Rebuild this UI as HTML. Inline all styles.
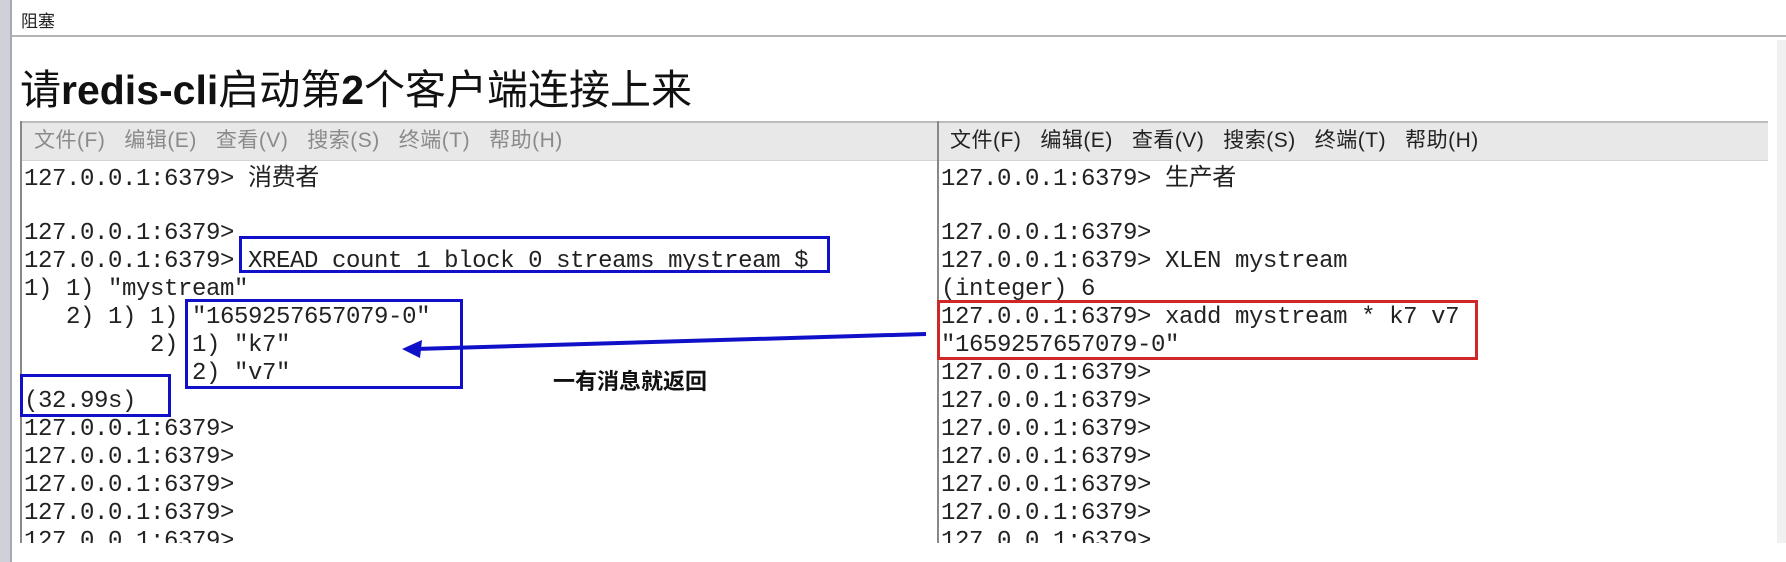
<!DOCTYPE html>
<html><head><meta charset="utf-8">
<style>
body{margin:0;width:1786px;height:562px;background:#fff;position:relative;overflow:hidden;font-family:"Liberation Sans","Noto Sans CJK SC",sans-serif;}
.a{position:absolute;white-space:pre;}
.t{position:absolute;white-space:pre;font-family:"Liberation Mono","Noto Sans CJK SC",monospace;font-size:24px;letter-spacing:-0.4px;color:#222;line-height:28px;}
.m{position:absolute;font-size:21px;white-space:pre;line-height:40px;letter-spacing:0.5px;}
.box{position:absolute;box-sizing:border-box;border:3px solid #1010c8;}
</style></head><body>
<div class="a" style="left:0;top:0;width:10px;height:562px;background:#d0d0d8"></div>
<div class="a" style="left:10px;top:0;width:2px;height:562px;background:#a8a8b0"></div>
<div class="a" style="left:21px;top:7px;font-size:17px;color:#222">阻塞</div>
<div class="a" style="left:12px;top:35px;width:1774px;height:2px;background:#b4b4b4"></div>
<div class="a" style="left:1777px;top:40px;width:9px;height:522px;background:#f0f0f0"></div>
<div class="a" style="left:20px;top:56px;font-size:41px;color:#111;letter-spacing:0px">请<b>redis-cli</b>启动第<b>2</b>个客户端连接上来</div>

<!-- left terminal -->
<div class="a" style="left:20px;top:121px;width:917px;height:40px;background:#e8e8e8;border-top:2px solid #bcbcbc;border-bottom:1px solid #d4d4d4;box-sizing:border-box"></div>
<div class="a" style="left:20px;top:121px;width:2px;height:422px;background:#888"></div>
<div class="m" style="left:34px;top:121px;color:#8a8a8a">文件(F)   编辑(E)   查看(V)   搜索(S)   终端(T)   帮助(H)</div>

<!-- right terminal -->
<div class="a" style="left:937px;top:121px;width:831px;height:40px;background:#e8e8e8;border-top:2px solid #bcbcbc;border-bottom:1px solid #d4d4d4;box-sizing:border-box"></div>
<div class="a" style="left:937px;top:121px;width:2px;height:422px;background:#888"></div>
<div class="m" style="left:950px;top:121px;color:#222">文件(F)   编辑(E)   查看(V)   搜索(S)   终端(T)   帮助(H)</div>

<div class="t" style="left:24px;top:166px">127.0.0.1:6379> 消费者</div>
<div class="t" style="left:24px;top:220px">127.0.0.1:6379>
127.0.0.1:6379> XREAD count 1 block 0 streams mystream $
1) 1) "mystream"
   2) 1) 1) "1659257657079-0"
         2) 1) "k7"
            2) "v7"
(32.99s)
127.0.0.1:6379>
127.0.0.1:6379>
127.0.0.1:6379>
127.0.0.1:6379>
127.0.0.1:6379></div>

<div class="t" style="left:941px;top:166px">127.0.0.1:6379> 生产者</div>
<div class="t" style="left:941px;top:220px">127.0.0.1:6379>
127.0.0.1:6379> XLEN mystream
(integer) 6
127.0.0.1:6379> xadd mystream * k7 v7
"1659257657079-0"
127.0.0.1:6379>
127.0.0.1:6379>
127.0.0.1:6379>
127.0.0.1:6379>
127.0.0.1:6379>
127.0.0.1:6379>
127.0.0.1:6379></div>

<div class="a" style="left:0;top:543px;width:1786px;height:19px;background:#fff"></div>
<div class="a" style="left:0;top:0;width:10px;height:562px;background:#d0d0d8"></div>
<div class="a" style="left:10px;top:0;width:2px;height:562px;background:#a8a8b0"></div>

<div class="box" style="left:239px;top:236px;width:591px;height:37px"></div>
<div class="box" style="left:185px;top:299px;width:278px;height:90px"></div>
<div class="box" style="left:20px;top:374px;width:151px;height:43px"></div>
<div class="box" style="left:937px;top:300px;width:541px;height:60px;border-color:#d02828"></div>

<svg class="a" style="left:0;top:0" width="1786" height="562">
<line x1="926" y1="334" x2="415" y2="349" stroke="#1010c8" stroke-width="4"/>
<polygon points="402,349 422,340 420,358" fill="#1010c8"/>
</svg>
<div class="a" style="left:553px;top:364px;font-size:22px;font-weight:bold;color:#111">一有消息就返回</div>
</body></html>
